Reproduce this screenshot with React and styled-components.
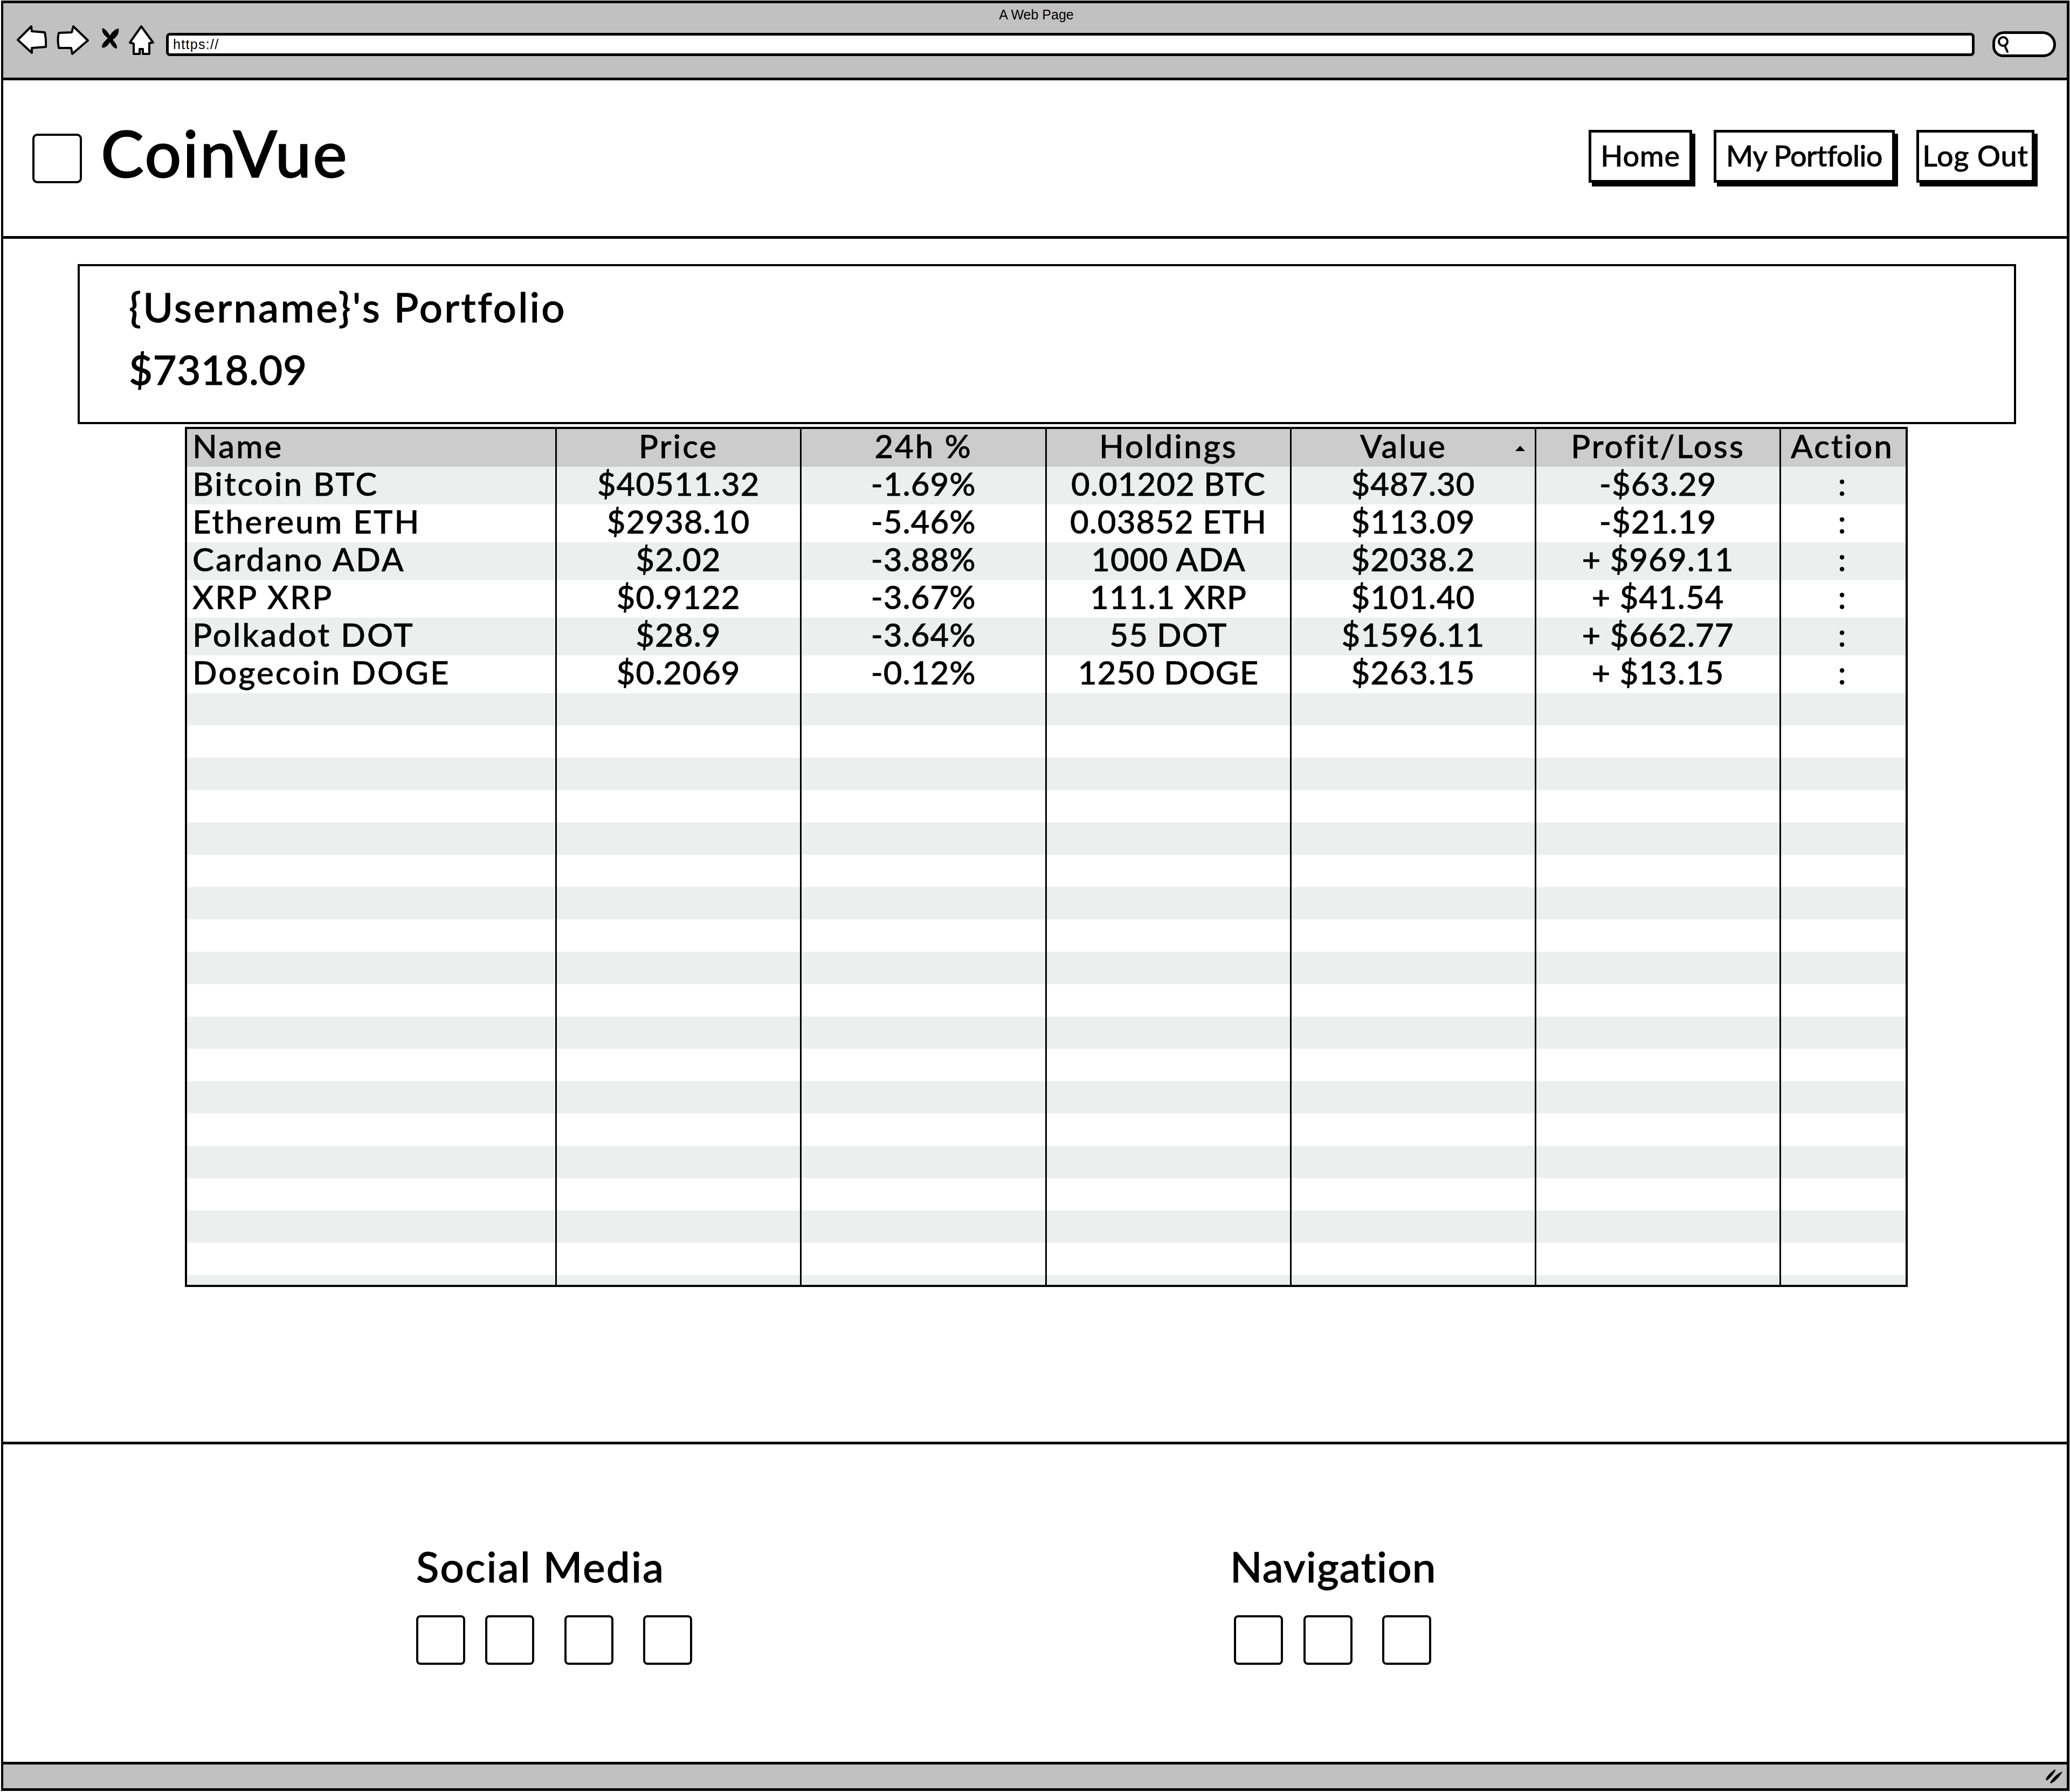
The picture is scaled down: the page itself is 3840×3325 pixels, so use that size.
import React from "react";
import styled, { createGlobalStyle } from "styled-components";

const rows = [
  ["Bitcoin BTC", "$40511.32", "-1.69%", "0.01202 BTC", "$487.30", "-$63.29", ":"],
  ["Ethereum ETH", "$2938.10", "-5.46%", "0.03852 ETH", "$113.09", "-$21.19", ":"],
  ["Cardano ADA", "$2.02", "-3.88%", "1000 ADA", "$2038.2", "+ $969.11", ":"],
  ["XRP XRP", "$0.9122", "-3.67%", "111.1 XRP", "$101.40", "+ $41.54", ":"],
  ["Polkadot DOT", "$28.9", "-3.64%", "55 DOT", "$1596.11", "+ $662.77", ":"],
  ["Dogecoin DOGE", "$0.2069", "-0.12%", "1250 DOGE", "$263.15", "+ $13.15", ":"],
];
const columns = ["Name", "Price", "24h %", "Holdings", "Value", "Profit/Loss", "Action"];
const columnWidths = [683, 454, 455, 454, 454, 454, 234];
const blankRows = Array.from({ length: 19 }, (_, i) => i);

export default function App() {
  return (
    <>
      <GlobalStyle />
      <Window>
        <Toolbar>
          <PageTitle>A Web Page</PageTitle>
          <AddressRow>
            <ToolIcon width="56" height="54" viewBox="0 0 56 54">
              <path d="M2 27 L27 2 L28 11 L52 13 Q55 27 54 40 L28 42 L28 51 Z" />
            </ToolIcon>
            <ToolIcon $left={18} width="60" height="56" viewBox="0 0 60 56">
              <path d="M58 28 L31 2 L28 13 L4 14 Q1 26 4 42 L27 42 L29 53 Z" />
            </ToolIcon>
            <ToolIcon $left={23} $top={5} width="34" height="40" viewBox="0 0 34 40">
              <path
                fill="#000"
                stroke="none"
                d="M2 0 C9 2 13 10 16 14 C19 8 25 2 32 1 C34 10 27 18 21 22 C25 26 30 32 29 38 C23 38 19 32 16 26 C13 32 7 38 1 36 C1 28 7 24 12 19 C6 14 0 8 2 0 Z"
              />
            </ToolIcon>
            <ToolIcon $left={17} width="48" height="56" viewBox="0 0 48 56">
              <path d="M23 2 L45 32 L38 33 L38 53 L26 53 L26 44 L20 44 L20 53 L9 53 L9 34 L2 32 Z" />
            </ToolIcon>
            <UrlBar>https://</UrlBar>
            <SearchPill>
              <svg width="26" height="34" viewBox="0 0 26 34">
                <circle cx="12" cy="12" r="8" fill="none" stroke="#000" strokeWidth="4" />
                <path d="M15 20 L20 31" stroke="#000" strokeWidth="4" strokeLinecap="round" />
              </svg>
            </SearchPill>
          </AddressRow>
        </Toolbar>

        <Header>
          <Brand>
            <LogoBox />
            <BrandName>CoinVue</BrandName>
          </Brand>
          <Nav>
            <NavButton $width={192} $spacing={0.8}>Home</NavButton>
            <NavButton $width={336} $spacing={-0.6}>My Portfolio</NavButton>
            <NavButton $width={219} $spacing={0.8}>Log Out</NavButton>
          </Nav>
        </Header>

        <Main>
          <Summary>
            <SummaryLine $spacing={3.2}>{"{Username}'s Portfolio"}</SummaryLine>
            <SummaryLine $spacing={0.5}>$7318.09</SummaryLine>
          </Summary>
          <TableFrame>
            <Table>
              <colgroup>
                {columnWidths.map((w, i) => (
                  <col key={i} width={w} />
                ))}
              </colgroup>
              <thead>
                <tr>
                  {columns.map((c) => (
                    <HeadCell key={c} $sorted={c === "Value"}>
                      {c}
                      {c === "Value" && <SortMark />}
                    </HeadCell>
                  ))}
                </tr>
              </thead>
              <tbody>
                {rows.map((row) => (
                  <DataRow key={row[0]}>
                    {row.map((value, i) => (
                      <Cell key={i}>{value}</Cell>
                    ))}
                  </DataRow>
                ))}
                {blankRows.map((n) => (
                  <BlankRow key={n}>
                    {columns.map((c) => (
                      <Cell key={c} />
                    ))}
                  </BlankRow>
                ))}
              </tbody>
            </Table>
          </TableFrame>
        </Main>

        <Footer>
          <FooterGroup>
            <FooterHeading $spacing={2.2}>Social Media</FooterHeading>
            <SquareRow>
              <Square />
              <Square $left={37} />
              <Square $left={56} />
              <Square $left={55} />
            </SquareRow>
          </FooterGroup>
          <FooterGroup $inset={2}>
            <FooterHeading $pull={-7} $spacing={1.2}>Navigation</FooterHeading>
            <SquareRow>
              <Square />
              <Square $left={38} />
              <Square $left={55} />
            </SquareRow>
          </FooterGroup>
        </Footer>

        <StatusBar>
          <svg width="34" height="28" viewBox="0 0 34 28">
            <path d="M1 19 C5 11 13 4 19 1 C20 5 10 16 3 22 Z M9 26 C13 17 24 8 32 5 C29 12 19 23 11 27 Z" />
          </svg>
        </StatusBar>
      </Window>
    </>
  );
}

const GlobalStyle = createGlobalStyle`
  * {
    box-sizing: border-box;
  }
  body {
    margin: 0;
    background: #fff;
    color: #000;
    font-family: "Lato", "Open Sans", sans-serif;
    font-variant-ligatures: none;
  }
`;

const Window = styled.div`
  display: flex;
  flex-direction: column;
  width: 3837px;
  height: 3322px;
  margin: 1px 1px 2px 2px;
  border: 5px solid #000;
  border-left-width: 4px;
`;

const Toolbar = styled.div`
  display: flex;
  flex-direction: column;
  height: 143px;
  padding: 6px 20px 0 25px;
  background: #c1c1c1;
  border-bottom: 5px solid #000;
`;

const PageTitle = styled.div`
  height: 35px;
  font-family: "Liberation Sans", Arial, sans-serif;
  font-size: 25px;
  line-height: 30px;
  text-align: center;
`;

const AddressRow = styled.div`
  display: flex;
  align-items: flex-start;
`;

const ToolIcon = styled.svg`
  flex: none;
  margin-left: ${(p) => p.$left || 0}px;
  margin-top: ${(p) => p.$top || 0}px;
  path {
    fill: #fff;
    stroke: #000;
    stroke-width: 4;
    stroke-linejoin: round;
  }
  path[fill] {
    fill: #000;
    stroke: none;
  }
`;

const UrlBar = styled.div`
  flex: 1;
  height: 43px;
  margin: 14px 0 0 21px;
  padding-left: 8px;
  background: #fff;
  border: 5px solid #000;
  border-radius: 7px;
  font-family: "Liberation Sans", Arial, sans-serif;
  font-size: 25px;
  line-height: 32px;
  word-spacing: 2px;
  letter-spacing: 1.3px;
`;

const SearchPill = styled.div`
  display: flex;
  align-items: center;
  flex: none;
  width: 118px;
  height: 48px;
  margin: 11px 0 0 33px;
  padding-left: 3px;
  background: #fff;
  border: 5px solid #000;
  border-radius: 26px 30px 28px 24px;
`;

const Header = styled.header`
  display: flex;
  align-items: center;
  justify-content: space-between;
  flex: none;
  height: 294px;
  padding: 0 60px 0 54px;
  border-bottom: 5px solid #000;
`;

const Brand = styled.div`
  display: flex;
  align-items: center;
  gap: 35px;
`;

const LogoBox = styled.div`
  width: 92px;
  height: 92px;
  border: 4px solid #000;
  border-radius: 9px;
`;

const BrandName = styled.div`
  margin-top: -22px;
  font-size: 120px;
  font-weight: 500;
  line-height: 130px;
  letter-spacing: 2.5px;
  -webkit-text-stroke: 1.5px #000;
`;

const Nav = styled.nav`
  display: flex;
  gap: 40px;
  margin-bottom: 8px;
`;

const NavButton = styled.div`
  width: ${(p) => p.$width}px;
  height: 98px;
  border: 5px solid #000;
  box-shadow: 6px 7px 0 #000;
  font-size: 54px;
  font-weight: 500;
  line-height: 86px;
  letter-spacing: ${(p) => p.$spacing}px;
  text-align: center;
  white-space: nowrap;
  -webkit-text-stroke: 0.6px #000;
`;

const Main = styled.main`
  display: flex;
  flex-direction: column;
  flex: 1;
  padding: 47px 0 0 138px;
`;

const Summary = styled.section`
  display: flex;
  flex-direction: column;
  gap: 24px;
  width: 3596px;
  height: 297px;
  padding: 29px 0 0 91px;
  border: 4px solid #000;
`;

const SummaryLine = styled.div`
  font-size: 76px;
  font-weight: 500;
  line-height: 92px;
  letter-spacing: ${(p) => p.$spacing}px;
  -webkit-text-stroke: 1px #000;
`;

const TableFrame = styled.div`
  width: 3196px;
  height: 1596px;
  margin: 5px 0 0 199px;
  border: 4px solid #000;
  overflow: hidden;
`;

const Table = styled.table`
  width: 3188px;
  table-layout: fixed;
  border-collapse: separate;
  border-spacing: 0;
  font-size: 60px;
  font-weight: 500;
  line-height: 62px;
  letter-spacing: 1px;
  -webkit-text-stroke: 0.6px #000;
`;

const HeadCell = styled.th`
  position: relative;
  height: 69px;
  padding: 0 ${(p) => (p.$sorted ? 36 : 0)}px 8px 0;
  background: #cccccc;
  font-weight: 500;
  letter-spacing: 3px;
  text-align: center;
  border-left: 3px solid #000;
  &:first-child {
    padding-left: 10px;
    border-left: 0;
    text-align: left;
  }
  &:last-child {
    padding-right: 4px;
  }
`;

const SortMark = styled.span`
  position: absolute;
  top: 31px;
  right: 18px;
  width: 0;
  height: 0;
  border-left: 9px solid transparent;
  border-right: 9px solid transparent;
  border-bottom: 10px solid #000;
`;

const Cell = styled.td`
  padding: 0 0 8px;
  text-align: center;
  white-space: nowrap;
  border-left: 3px solid #000;
  &:first-child {
    padding-left: 10px;
    border-left: 0;
    letter-spacing: 3px;
    text-align: left;
  }
  &:last-child {
    padding-right: 4px;
  }
`;

const DataRow = styled.tr`
  height: 70px;
  &:nth-child(odd) {
    background: #edefee;
  }
`;

const BlankRow = styled.tr`
  height: 60px;
  &:nth-child(odd) {
    background: #edefee;
  }
`;

const Footer = styled.footer`
  display: grid;
  grid-template-columns: 1515px auto;
  flex: none;
  height: 594px;
  padding: 180px 0 0 766px;
  border-top: 5px solid #000;
`;

const FooterGroup = styled.div`
  display: flex;
  flex-direction: column;
  gap: 45px;
  padding-left: ${(p) => p.$inset || 0}px;
`;

const FooterHeading = styled.div`
  margin-left: ${(p) => p.$pull || 0}px;
  font-size: 78px;
  font-weight: 500;
  line-height: 92px;
  letter-spacing: ${(p) => p.$spacing}px;
  -webkit-text-stroke: 1px #000;
`;

const SquareRow = styled.div`
  display: flex;
`;

const Square = styled.div`
  width: 91px;
  height: 92px;
  margin-left: ${(p) => p.$left || 0}px;
  border: 4px solid #000;
  border-radius: 8px;
`;

const StatusBar = styled.div`
  display: flex;
  align-items: center;
  justify-content: flex-end;
  flex: none;
  height: 49px;
  padding-right: 6px;
  background: #c1c1c1;
  border-top: 5px solid #000;
`;
